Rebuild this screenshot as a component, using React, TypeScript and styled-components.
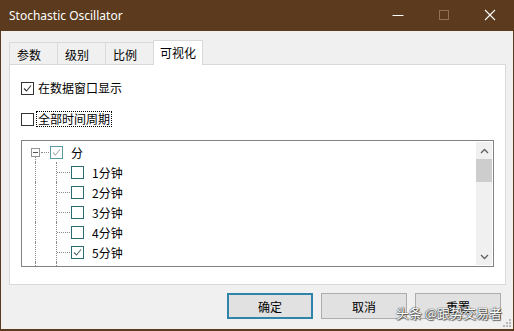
import { FC } from 'react';
import styled, { createGlobalStyle } from 'styled-components';

const GlobalStyle = createGlobalStyle`
  html, body {
    margin: 0;
    padding: 0;
    overflow: hidden;
    background: #f0f0f0;
  }

  * {
    box-sizing: border-box;
  }
`;

const CJK = `"Noto Sans CJK SC", "Noto Sans", sans-serif`;

interface TreeItem {
  label: string;
  checked: boolean;
}

const children: TreeItem[] = [
  { label: '1分钟', checked: false },
  { label: '2分钟', checked: false },
  { label: '3分钟', checked: false },
  { label: '4分钟', checked: false },
  { label: '5分钟', checked: true },
];

const tabs = ['参数', '级别', '比例'];

interface CheckBoxProps {
  checked?: boolean;
  tone?: 'plain' | 'tree' | 'mixed';
}

const CheckBox: FC<CheckBoxProps> = ({ checked, tone = 'plain' }) => (
  <Box $tone={tone}>
    {checked && (
      <svg width='11' height='11' viewBox='0 0 11 11'>
        <path
          d='M2 5.5 L4.5 8 L9 2.5'
          fill='none'
          stroke={tone === 'plain' ? '#333' : tone === 'mixed' ? '#a9b3b5' : '#4e6a70'}
          strokeWidth='1.1'
        />
      </svg>
    )}
  </Box>
);

const App: FC = () => {
  return (
    <>
      <GlobalStyle />
      <Window>
        <TitleBar>
          <Title>Stochastic Oscillator</Title>
          <Controls>
            <ControlButton>
              <svg width='12' height='12' viewBox='0 0 12 12'>
                <line x1='0.5' y1='6.5' x2='11.5' y2='6.5' stroke='#fff' strokeWidth='1' />
              </svg>
            </ControlButton>
            <ControlButton>
              <svg width='12' height='12' viewBox='0 0 12 12'>
                <rect x='1.5' y='1.5' width='9' height='9' fill='none' stroke='#8f7056' strokeWidth='1' />
              </svg>
            </ControlButton>
            <ControlButton>
              <svg width='12' height='12' viewBox='0 0 12 12'>
                <path d='M1 1 L11 11 M11 1 L1 11' stroke='#fff' strokeWidth='1.1' />
              </svg>
            </ControlButton>
          </Controls>
        </TitleBar>

        <Body>
          <TabStrip>
            {tabs.map((t) => (
              <Tab key={t}>{t}</Tab>
            ))}
            <ActiveTab>可视化</ActiveTab>
          </TabStrip>

          <Panel>
            <CheckRow>
              <CheckBox checked />
              <CheckLabel>在数据窗口显示</CheckLabel>
            </CheckRow>
            <CheckRow>
              <CheckBox />
              <CheckLabel $focused>全部时间周期</CheckLabel>
            </CheckRow>

            <TreeBox>
              <TreeContent>
                <TreeRow>
                  <Connector $kind='root'>
                    <Expander>
                      <svg width='7' height='7' viewBox='0 0 7 7'>
                        <line x1='1' y1='3.5' x2='6' y2='3.5' stroke='#555' strokeWidth='1' />
                      </svg>
                    </Expander>
                  </Connector>
                  <CheckBox checked tone='mixed' />
                  <ItemLabel>分</ItemLabel>
                </TreeRow>
                {children.map((c) => (
                  <TreeRow key={c.label}>
                    <Guide />
                    <Connector $kind='child' />
                    <CheckBox checked={c.checked} tone='tree' />
                    <ItemLabel>{c.label}</ItemLabel>
                  </TreeRow>
                ))}
                {/* the next item is scrolled out of view; only its guide lines show */}
                <TreeRow>
                  <Guide />
                  <Guide />
                </TreeRow>
              </TreeContent>

              <ScrollBar>
                <ScrollArrow>
                  <svg width='9' height='6' viewBox='0 0 9 6'>
                    <path d='M1 5 L4.5 1.5 L8 5' fill='none' stroke='#606060' strokeWidth='1.3' />
                  </svg>
                </ScrollArrow>
                <Thumb />
                <ScrollTrack />
                <ScrollArrow>
                  <svg width='9' height='6' viewBox='0 0 9 6'>
                    <path d='M1 1 L4.5 4.5 L8 1' fill='none' stroke='#606060' strokeWidth='1.3' />
                  </svg>
                </ScrollArrow>
              </ScrollBar>
            </TreeBox>
          </Panel>

          <ButtonRow>
            <Button $primary>确定</Button>
            <Button>取消</Button>
            <Button>重置</Button>
          </ButtonRow>
        </Body>

        <Watermark>头条 @跟势交易者</Watermark>
        <Grip>
          <svg width='8' height='8' viewBox='0 0 8 8'>
            <rect x='6' y='0' width='2' height='2' fill='#b8b8b8' />
            <rect x='3' y='3' width='2' height='2' fill='#b8b8b8' />
            <rect x='6' y='3' width='2' height='2' fill='#b8b8b8' />
            <rect x='0' y='6' width='2' height='2' fill='#b8b8b8' />
            <rect x='3' y='6' width='2' height='2' fill='#b8b8b8' />
            <rect x='6' y='6' width='2' height='2' fill='#b8b8b8' />
          </svg>
        </Grip>
      </Window>
    </>
  );
};

const Window = styled.div`
  position: relative;
  width: 514px;
  height: 331px;
  display: flex;
  flex-direction: column;
  background: #f0f0f0;
  font-family: ${CJK};
  font-size: 12px;
  color: #000;
  overflow: hidden;
`;

const TitleBar = styled.div`
  height: 31px;
  flex: none;
  display: flex;
  align-items: center;
  background: #5b3a1d;
  padding-left: 9px;
`;

const Title = styled.div`
  flex: 1;
  color: #fff;
  font-family: 'Noto Sans', 'Open Sans', sans-serif;
  font-size: 12px;
  margin-top: -1px;
`;

const Controls = styled.div`
  display: flex;
  height: 100%;
  margin-right: 1px;
`;

const ControlButton = styled.div`
  width: 46px;
  height: 100%;
  display: flex;
  align-items: center;
  justify-content: center;
  margin-top: -1px;
`;

const Body = styled.div`
  flex: 1;
  display: flex;
  flex-direction: column;
  border: 1px solid #5b3a1d;
  border-top: none;
  border-bottom-width: 2px;
  padding: 9px 7px 0 8px;
`;

const TabStrip = styled.div`
  display: flex;
  align-items: flex-start;
  height: 25px;
  margin-bottom: -1px;
  position: relative;
  z-index: 1;
`;

const Tab = styled.div`
  width: 48px;
  height: 22px;
  margin-top: 2px;
  padding-left: 7px;
  display: flex;
  align-items: center;
  border: 1px solid #d9d9d9;
  border-right: none;
  border-bottom: none;
  background: #f0f0f0;
  padding-top: 2px;
`;

const ActiveTab = styled.div`
  width: 50px;
  height: 25px;
  padding-left: 6px;
  display: flex;
  align-items: center;
  border: 1px solid #d9d9d9;
  border-bottom: none;
  background: #fff;
  padding-bottom: 2px;
`;

const Panel = styled.div`
  height: 221px;
  flex: none;
  display: flex;
  flex-direction: column;
  gap: 11px;
  background: #fff;
  border: 1px solid #d9d9d9;
  padding: 13px 11px 0 11px;
`;

const CheckRow = styled.div`
  height: 20px;
  display: flex;
  align-items: center;
`;

const Box = styled.span<{ $tone: string }>`
  width: 13px;
  height: 13px;
  flex: none;
  display: flex;
  align-items: center;
  justify-content: center;
  background: #fff;
  border: 1px solid
    ${({ $tone }) => ($tone === 'plain' ? '#333' : $tone === 'mixed' ? '#5c9aa2' : '#2b6c74')};
`;

const CheckLabel = styled.span<{ $focused?: boolean }>`
  margin-left: 2px;
  padding: 0 1px;
  line-height: 14px;
  border: 1px ${({ $focused }) => ($focused ? 'dotted #000' : 'solid transparent')};
`;

const TreeBox = styled.div`
  height: 127px;
  flex: none;
  display: flex;
  border: 1px solid #828282;
  background: #fff;
  overflow: hidden;
`;

const TreeContent = styled.div`
  flex: 1;
  padding: 1px 0 0 3px;
  overflow: hidden;
`;

const TreeRow = styled.div`
  height: 20px;
  display: flex;
  align-items: center;
`;

const Guide = styled.span`
  width: 21px;
  height: 20px;
  flex: none;
  position: relative;

  &::before {
    content: '';
    position: absolute;
    left: 10px;
    top: 0;
    bottom: 0;
    border-left: 1px dotted #8a8a8a;
  }
`;

const Connector = styled.span<{ $kind: 'root' | 'child' }>`
  width: 25px;
  height: 20px;
  flex: none;
  position: relative;
  display: flex;
  align-items: center;

  &::before {
    content: '';
    position: absolute;
    left: 10px;
    top: ${({ $kind }) => ($kind === 'root' ? '15px' : '0')};
    bottom: 0;
    border-left: 1px dotted #8a8a8a;
  }

  &::after {
    content: '';
    position: absolute;
    left: ${({ $kind }) => ($kind === 'root' ? '16px' : '11px')};
    right: 1px;
    top: 10px;
    border-top: 1px dotted #8a8a8a;
  }
`;

const Expander = styled.span`
  width: 9px;
  height: 9px;
  margin-left: 6px;
  display: flex;
  align-items: center;
  justify-content: center;
  border: 1px solid #959595;
  background: #fff;
  position: relative;
  z-index: 1;
`;

const ItemLabel = styled.span`
  margin-left: 8px;
  font-size: 12px;
`;

const ScrollBar = styled.div`
  width: 16px;
  flex: none;
  margin: 1px 1px 1px 0;
  display: flex;
  flex-direction: column;
  background: #f0f0f0;
`;

const ScrollArrow = styled.div`
  height: 17px;
  flex: none;
  display: flex;
  align-items: center;
  justify-content: center;
`;

const Thumb = styled.div`
  height: 23px;
  flex: none;
  background: #cdcdcd;
`;

const ScrollTrack = styled.div`
  flex: 1;
`;

const ButtonRow = styled.div`
  display: flex;
  justify-content: flex-end;
  gap: 8px;
  margin-top: 8px;
  padding-right: 5px;
`;

const Button = styled.button<{ $primary?: boolean }>`
  width: 86px;
  height: 26px;
  padding: 0;
  font-family: ${CJK};
  font-size: 12px;
  color: #000;
  background: #e1e1e1;
  border: ${({ $primary }) => ($primary ? '2px solid #2f84a8' : '1px solid #adadad')};
`;

const Watermark = styled.div`
  position: absolute;
  right: 12px;
  bottom: 9px;
  font-family: ${CJK};
  font-size: 13px;
  color: #fff;
  text-shadow: 0 0 1px #333, 0 0 1px #333, 1px 1px 1px rgba(0, 0, 0, 0.6);
`;

const Grip = styled.div`
  position: absolute;
  right: 3px;
  bottom: 4px;
  display: flex;
`;

export default App;
